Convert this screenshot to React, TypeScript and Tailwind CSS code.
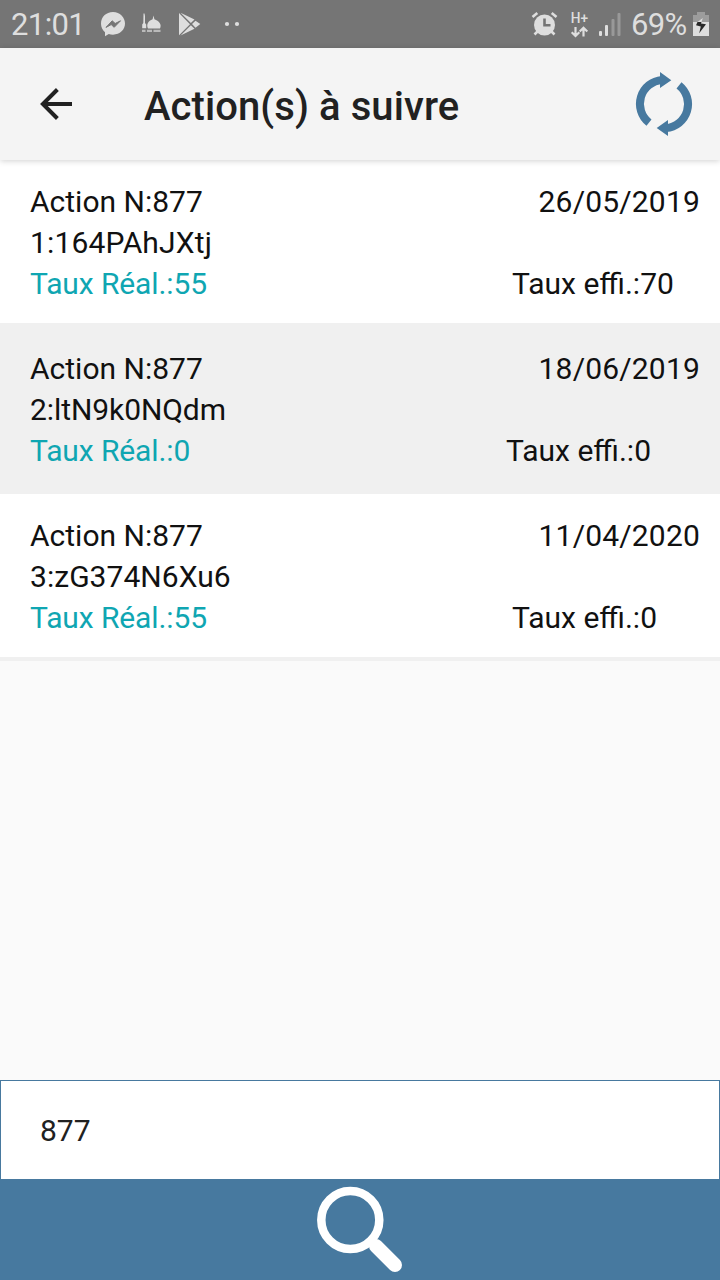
type Action = {
  id: string;
  date: string;
  real: number;
  effi: number;
  offset: string;
  tracking: string;
};

const actions: Action[] = [
  { id: '1:164PAhJXtj', date: '26/05/2019', real: 55, effi: 70, offset: 'w-[208px]', tracking: 'tracking-[0.17px]' },
  { id: '2:ltN9k0NQdm', date: '18/06/2019', real: 0, effi: 0, offset: 'w-[214px]', tracking: 'tracking-[-0.08px]' },
  { id: '3:zG374N6Xu6', date: '11/04/2020', real: 55, effi: 0, offset: 'w-[208px]', tracking: 'tracking-[0.04px]' },
];

function StatusBar() {
  return (
    <div className="flex h-12 shrink-0 items-center bg-[#757575] text-[31px] text-[#dedede]">
      <span className="ml-[11px] w-[90px] pt-[2px] leading-12 tracking-[-0.6px]">21:01</span>
      <svg className="h-12 w-[150px]" viewBox="101 0 150 48" fill="currentColor">
        <path d="M113 12C106 12 101 17 101 23.8c0 3.5 1.6 6.4 4 8.4v4l3.8-2.1c1.3.4 2.7.6 4.2.6 7 0 12-5 12-11.1S120 12 113 12Z" />
        <path d="M106 27.4 112.2 20.8l3 2.7 5.3-2.7-6.3 6.5-3-2.7Z" fill="#757575" stroke="#757575" strokeWidth="1" />
        <path d="M143.5 13.5h1l.5 2.5v7l1.2 1.5v3.8h-4v-3.8l1.1-1.5ZM148 28.5c-2-4.5.3-7.4 4.6-9.3l.9-3.7.9 3.7c4.5 1.9 7.8 4.8 5.6 9.3Z" />
        <path d="M142 30.8h3.5M147 30.8h5M153.5 30.8h7" fill="none" stroke="currentColor" strokeWidth="2.2" opacity=".65" />
        <path d="M179 13v22.3l11-11.1ZM180.5 12.8l10.4 10.1 3.6-3.3ZM180.5 35.4l10.4-10.1 3.6 3.5ZM192 24.1l3.5-3.4 4.8 3.4-4.8 3.6Z" />
        <circle cx="227" cy="24" r="2.1" />
        <circle cx="237" cy="24" r="2.1" />
      </svg>
      <div className="flex-1" />
      <svg className="h-12 w-[100px]" viewBox="530 0 100 48" fill="currentColor">
        <circle cx="544.5" cy="25" r="10.5" />
        <path d="m532.5 17 4.8-4M556.5 17l-4.8-4M537.5 31.5l-3 3M551.5 31.5l3 3" stroke="currentColor" strokeWidth="2.6" fill="none" />
        <path d="M544.5 18.5v6.7h6" fill="none" stroke="#757575" strokeWidth="2.6" />
        <text transform="translate(570.8 23.2) scale(1.05 1.25)" fontSize="11.5" fontWeight="500" textLength="16.5" lengthAdjust="spacingAndGlyphs">H+</text>
        <path d="M575.5 27v9M571.7 32.2l3.8 3.8 3.8-3.8M583.5 36.5v-9M579.7 31.5l3.8-3.8 3.8 3.8" fill="none" stroke="currentColor" strokeWidth="2.2" />
        <rect x="599" y="31" width="3" height="5" rx="1" />
        <rect x="605" y="25" width="3" height="11" rx="1" />
        <rect x="611.5" y="19" width="3" height="17" rx="1" fill="#999" />
        <rect x="617.5" y="13" width="3" height="23" rx="1" fill="#999" />
      </svg>
      <span className="ml-[1px] w-[61px] pt-[2px] leading-12 tracking-[-0.7px]">69%</span>
      <svg className="mr-[10px] h-12 w-[18px]" viewBox="692 0 18 48">
        <path d="M697 12h8v3h4v7h-16v-7h4Z" fill="#9c9c9c" />
        <path d="M693 22h16v14h-16Z" fill="#dedede" />
        <path d="M702.8 18 701.5 22h-4Z" fill="#dedede" />
        <path d="M697.5 22h4l-.5 1.5 5 .8-6.8 8.9 1.6-6.7-4.8-1.2Z" fill="#292929" />
      </svg>
    </div>
  );
}

function Header() {
  return (
    <header className="relative z-10 flex h-28 shrink-0 items-center bg-[#f4f4f4] shadow-[0_1px_6px_rgba(0,0,0,0.18)]">
      <svg className="ml-10 h-8 w-8 shrink-0" viewBox="0 0 32 32" fill="none" stroke="#212121">
        <path d="M32 16H3M17.4 1.5 2.9 16l14.5 14.5" strokeWidth="4" />
      </svg>
      <h1 className="ml-[72px] flex-1 pt-[6px] text-[40px] font-medium leading-none tracking-[0.08px] text-[#212121]">Action(s) à suivre</h1>
      <svg className="mr-[26px] h-16 w-[60px]" viewBox="634 72 60 64" fill="none">
        <path d="M649 122.7A24 24 0 0 1 662 80M679 85.3A24 24 0 0 1 666 128" stroke="#47799f" strokeWidth="8" />
        <path d="M660 72 671.3 80.3 660 88ZM668 120 656.7 128 668 136Z" fill="#47799f" />
      </svg>
    </header>
  );
}

function ActionRow({ action, shaded }: { action: Action; shaded: boolean }) {
  return (
    <li
      className={`h-[167px] border-b-4 border-[#f0f0f0] pb-[19px] pl-[30px] pr-5 pt-[21px] leading-[41px] ${shaded ? 'bg-[#f0f0f0]' : 'bg-white'}`}
    >
      <div className="flex justify-between">
        <span>Action N:877</span>
        <span className="tracking-[0.18px]">{action.date}</span>
      </div>
      <div className={action.tracking}>{action.id}</div>
      <div className="-mr-5 flex justify-between">
        <span className="tracking-[-0.1px] text-[#0fa6b2]">Taux Réal.:{action.real}</span>
        <span className={action.offset}>Taux effi.:{action.effi}</span>
      </div>
    </li>
  );
}

export default function App() {
  return (
    <div className="flex h-screen w-full flex-col overflow-hidden bg-[#fafafa] font-['Roboto',sans-serif] text-[30px] text-[#111111]">
      <StatusBar />
      <Header />
      <main className="flex-1">
        <ul>
          {actions.map((action, index) => (
            <ActionRow key={action.id} action={action} shaded={index % 2 === 1} />
          ))}
        </ul>
      </main>
      <input
        aria-label="Action"
        defaultValue="877"
        className="h-[100px] w-full shrink-0 border border-[#47799f] bg-white px-[39px] text-[#212121] outline-none"
      />
      <button aria-label="Rechercher" className="flex h-[100px] w-full shrink-0 justify-center bg-[#47799f]">
        <svg className="h-[100px] w-[90px]" viewBox="315 1180 90 100" fill="none" stroke="white">
          <circle cx="350.3" cy="1220" r="29" strokeWidth="8.5" />
          <path d="M371.5 1241 375 1244.5" strokeWidth="7" />
          <path d="m376 1246 19 19" strokeWidth="14" strokeLinecap="round" />
        </svg>
      </button>
    </div>
  );
}
